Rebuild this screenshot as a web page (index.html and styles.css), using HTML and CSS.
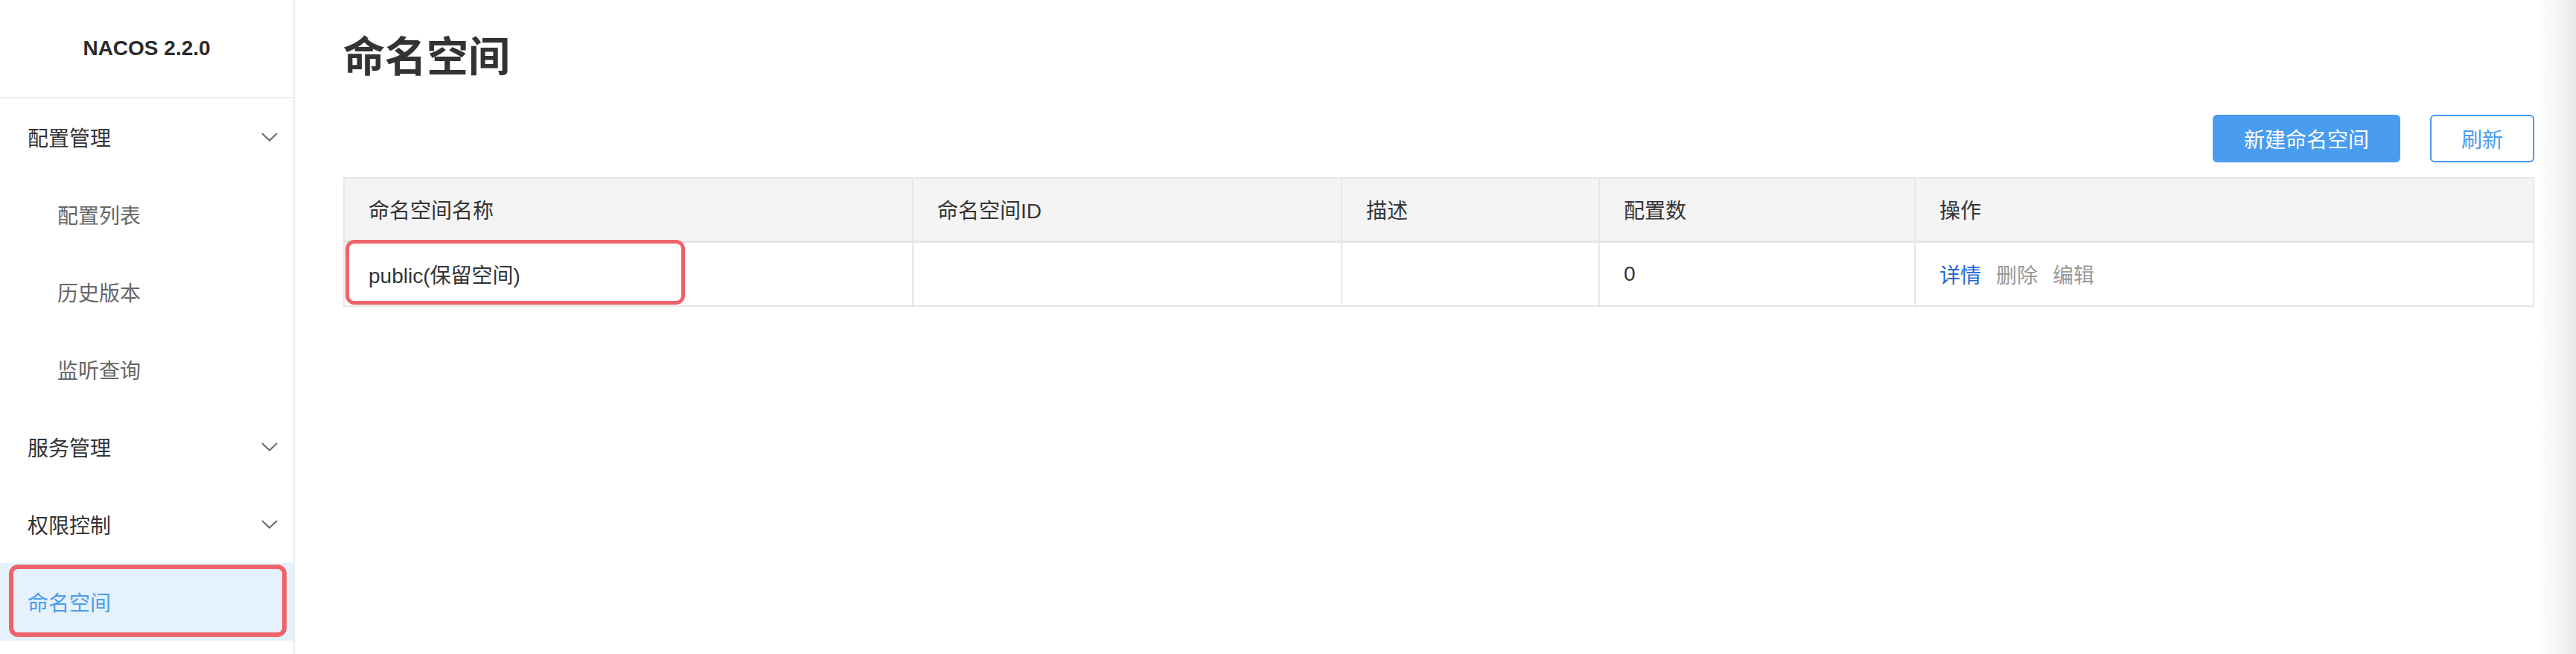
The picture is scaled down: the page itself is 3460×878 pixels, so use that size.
FILE: index.html
```html
<!DOCTYPE html>
<html lang="zh-CN">
<head>
<meta charset="utf-8">
<title>命名空间 - NACOS</title>
<link rel="stylesheet" href="styles.css">
</head>
<body>
<div class="app">
  <aside class="sidebar">
    <div class="brand">NACOS 2.2.0</div>
    <nav class="menu">
      <div class="menu-item group"><span>配置管理</span><svg class="chev" width="22" height="12" viewBox="0 0 22 12"><polyline points="1,1 11,10.5 21,1" fill="none" stroke="#6b6b6b" stroke-width="2"/></svg></div>
      <div class="menu-item sub">配置列表</div>
      <div class="menu-item sub">历史版本</div>
      <div class="menu-item sub">监听查询</div>
      <div class="menu-item group"><span>服务管理</span><svg class="chev" width="22" height="12" viewBox="0 0 22 12"><polyline points="1,1 11,10.5 21,1" fill="none" stroke="#6b6b6b" stroke-width="2"/></svg></div>
      <div class="menu-item group"><span>权限控制</span><svg class="chev" width="22" height="12" viewBox="0 0 22 12"><polyline points="1,1 11,10.5 21,1" fill="none" stroke="#6b6b6b" stroke-width="2"/></svg></div>
      <div class="menu-item group active"><span>命名空间</span><span class="mark mark-nav"></span></div>
    </nav>
  </aside>
  <main class="main">
    <h1 class="title">命名空间</h1>
    <div class="toolbar">
      <button class="btn btn-primary">新建命名空间</button>
      <button class="btn btn-outline">刷新</button>
    </div>
    <table class="grid">
      <colgroup>
        <col class="c1"><col class="c2"><col class="c3"><col class="c4"><col class="c5">
      </colgroup>
      <thead>
        <tr><th>命名空间名称</th><th>命名空间ID</th><th>描述</th><th>配置数</th><th>操作</th></tr>
      </thead>
      <tbody>
        <tr>
          <td class="name-cell">public(保留空间)<span class="mark mark-cell"></span></td>
          <td></td>
          <td></td>
          <td>0</td>
          <td><a class="link link-main">详情</a><a class="link link-off">删除</a><a class="link link-off">编辑</a></td>
        </tr>
      </tbody>
    </table>
  </main>
  <div class="edge"></div>
</div>
</body>
</html>
```

FILE: styles.css
```css
* { box-sizing: border-box; }
html, body { margin: 0; padding: 0; background: #fff; }
body {
  font-family: "Liberation Sans", "Noto Sans CJK SC", sans-serif;
  color: #333;
  font-size: 28px;
}
.app { display: flex; height: 878px; overflow: hidden; }

.sidebar {
  width: 396px;
  flex: none;
  border-right: 2px solid #ececec;
  display: flex;
  flex-direction: column;
}
.brand {
  height: 132px;
  border-bottom: 2px solid #eeeeee;
  display: flex;
  align-items: center;
  justify-content: center;
  font-weight: bold;
  font-size: 28px;
  color: #2b2b2b;
}
.menu { display: flex; flex-direction: column; }
.menu-item {
  height: 104px;
  display: flex;
  align-items: center;
  justify-content: space-between;
  padding: 0 21px 0 37px;
  font-family: "Noto Sans CJK SC", sans-serif;
  font-size: 28px;
  color: #333;
  position: relative;
}
.menu-item.sub { padding-left: 77px; color: #666; }
.menu-item.active { background: #e5f1fc; color: #4a9cf1; }
.chev { display: block; }

.mark {
  position: absolute;
  border: 6px solid #ee646a;
  border-radius: 12px;
  pointer-events: none;
}
.mark-nav { left: 12px; right: 9px; top: 2px; bottom: 5px; }

.main {
  flex: 1;
  padding: 32px 0 0 65px;
  min-width: 0;
}
.title {
  margin: 0;
  font-family: "Noto Sans CJK SC", sans-serif;
  font-size: 56px;
  line-height: 80px;
  font-weight: bold;
  color: #333;
}
.toolbar {
  margin-top: 42px;
  display: flex;
  justify-content: flex-end;
  gap: 40px;
}
.btn {
  height: 64px;
  border-radius: 6px;
  font-family: "Noto Sans CJK SC", sans-serif;
  font-size: 28px;
  line-height: 1;
  cursor: pointer;
}
.btn-primary { background: #4a9cf1; color: #fff; border: none; padding: 0 42px; }
.btn-outline { background: #fff; color: #4a9cf1; border: 2px solid #4a9cf1; padding: 0 40px; }

.grid {
  margin-top: 20px;
  width: 100%;
  border-collapse: collapse;
  table-layout: fixed;
  border: 2px solid #e6e6e6;
  font-family: "Liberation Sans", "Noto Sans CJK SC", sans-serif;
  font-size: 28px;
}
.c1 { width: 764px; }
.c2 { width: 576px; }
.c3 { width: 346px; }
.c4 { width: 424px; }
.grid th, .grid td {
  text-align: left;
  padding: 0 32px;
  border-right: 2px solid #e6e6e6;
  color: #333;
  font-weight: normal;
}
.grid th {
  height: 85px;
  background: #f4f4f4;
  border-bottom: 3px solid #e6e6e6;
}
.grid td { height: 87px; }
.name-cell { position: relative; }
.mark-cell { left: 1px; top: -4px; width: 456px; height: 87px; border-width: 5px; }

.link { margin-right: 20px; }
.link-main { color: #2468d2; }
.link-off { color: #999; }

.edge {
  width: 56px;
  flex: none;
  background: linear-gradient(to right, #ffffff 0%, #f7f7f7 50%, #e9e9e9 100%);
}
```
